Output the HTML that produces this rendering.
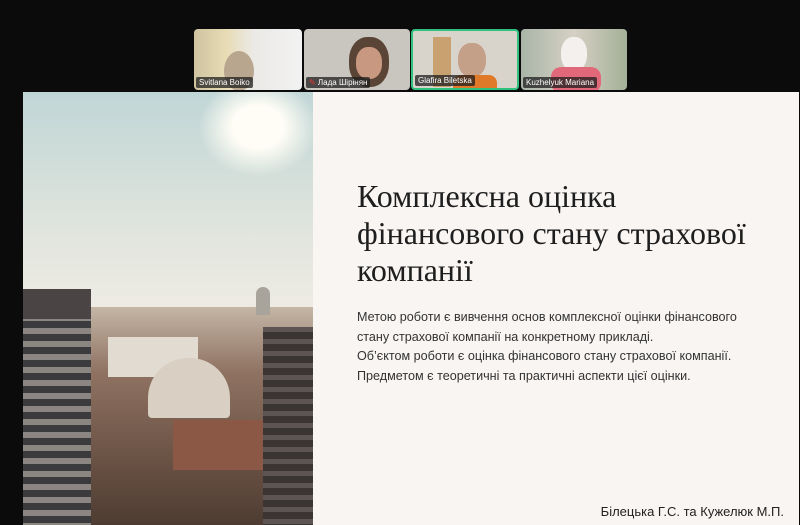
<!DOCTYPE html>
<html><head><meta charset="utf-8"><style>
*{margin:0;padding:0;box-sizing:border-box}
body{width:800px;height:525px;background:#0b0b0b;position:relative;overflow:hidden;font-family:"Liberation Sans",sans-serif}
.tile{position:absolute;top:29px;height:61px;border-radius:4px;overflow:hidden}
.lbl{position:absolute;left:2px;bottom:2px;background:rgba(30,30,30,.75);color:#fff;font-size:8px;padding:1px 3px;border-radius:2px;white-space:nowrap}
.slide{position:absolute;left:23px;top:92px;width:776px;height:433px;background:#f8f5f3}
.img{position:absolute;left:0;top:0;width:290px;height:433px;overflow:hidden;background:linear-gradient(180deg,#c0d6d6 0%,#e3e6de 35%,#f3eee7 58%,#e6ddd2 68%)}
h1{position:absolute;left:334px;top:86px;font-family:"Liberation Serif",serif;font-weight:normal;font-size:32px;line-height:37px;color:#1e1e1e;white-space:nowrap}
.body{position:absolute;left:334px;top:216px;font-size:12.6px;line-height:19.7px;color:#333;white-space:nowrap}
.auth{position:absolute;right:15px;top:412px;font-size:13px;color:#222}
</style></head><body>
<div class="tile" style="left:194px;width:108px;background:linear-gradient(90deg,#cfc3a0 0,#e8dcb5 30%,#eae9e6 55%,#f2f2f2 100%)"><div style="position:absolute;left:30px;top:22px;width:30px;height:40px;border-radius:50%;background:#b8a68f"></div><div class="lbl">Svitlana Boiko</div></div>
<div class="tile" style="left:304px;width:106px;background:#c9c6c0"><div style="position:absolute;left:45px;top:8px;width:40px;height:50px;border-radius:45%;background:#5a4436"></div><div style="position:absolute;left:52px;top:18px;width:26px;height:32px;border-radius:45%;background:#c99880"></div><div class="lbl"><span style="color:#e33">✎</span> Лада Шірінян</div></div>
<div class="tile" style="left:411px;width:108px;background:#d8d4cc;border:2px solid #2fc27f"><div style="position:absolute;left:20px;top:6px;width:18px;height:50px;background:#c9a070"></div><div style="position:absolute;left:45px;top:12px;width:28px;height:34px;border-radius:45%;background:#c4a088"></div><div style="position:absolute;left:40px;top:44px;width:44px;height:20px;background:#e07a2a;border-radius:8px"></div><div class="lbl">Glafira Biletska</div></div>
<div class="tile" style="left:521px;width:106px;background:linear-gradient(90deg,#a9b5a8,#d6d0c4 50%,#a4b098)"><div style="position:absolute;left:40px;top:8px;width:26px;height:34px;border-radius:45%;background:#f4f0ee"></div><div style="position:absolute;left:30px;top:38px;width:50px;height:26px;background:#e06878;border-radius:10px"></div><div class="lbl">Kuzhelyuk Mariana</div></div>
<div class="slide">
<div class="img">
<div style="position:absolute;left:175px;top:-15px;width:120px;height:100px;border-radius:50%;background:radial-gradient(#fffdf5 30%,rgba(255,253,240,0) 70%)"></div>
<div style="position:absolute;left:0;top:215px;width:290px;height:218px;background:linear-gradient(180deg,#c4b6a6,#8f7262 30%,#6a5244 70%,#4e3c32)"></div>
<div style="position:absolute;left:85px;top:245px;width:90px;height:40px;background:#e2dbd2"></div>
<div style="position:absolute;left:125px;top:266px;width:82px;height:60px;background:#d9cfc2;border-radius:40px 40px 4px 4px"></div>
<div style="position:absolute;left:150px;top:328px;width:90px;height:50px;background:#8c5846"></div>
<div style="position:absolute;left:0;top:197px;width:68px;height:236px;background:repeating-linear-gradient(180deg,#8c8682 0 6px,#3b3b3d 6px 13px)"></div>
<div style="position:absolute;left:0;top:197px;width:68px;height:30px;background:#4a4544"></div>
<div style="position:absolute;left:240px;top:235px;width:50px;height:198px;background:repeating-linear-gradient(180deg,#5c5553 0 5px,#3a3533 5px 12px)"></div>
<div style="position:absolute;left:233px;top:195px;width:14px;height:28px;background:#a8a49c;border-radius:7px 7px 0 0"></div>
</div>
<h1>Комплексна оцінка<br>фінансового стану страхової<br>компанії</h1>
<div class="body">Метою роботи є вивчення основ комплексної оцінки фінансового<br>стану страхової компанії на конкретному прикладі.<br>Об’єктом роботи є оцінка фінансового стану страхової компанії.<br>Предметом є теоретичні та практичні аспекти цієї оцінки.</div>
<div class="auth">Білецька Г.С. та Кужелюк М.П.</div>
</div>
</body></html>
